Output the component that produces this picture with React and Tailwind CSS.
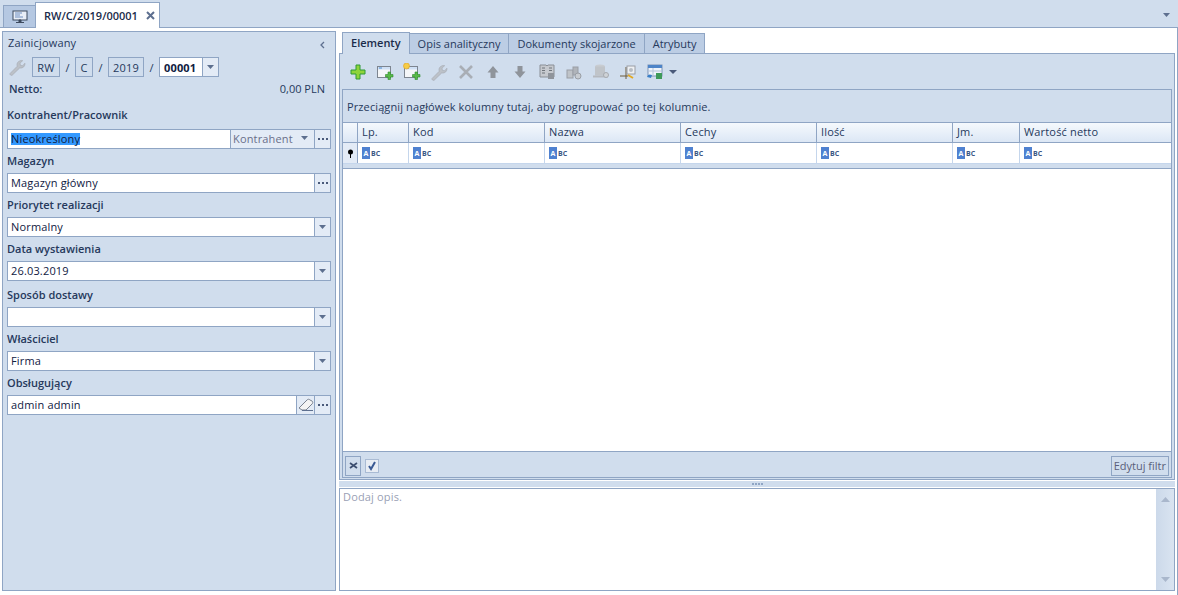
import React from "react";

const cols = "grid grid-cols-[15px_51px_136px_136px_136px_136px_67px_1fr]";

function Caret({ className = "fill-[#5d6f8f]", w = 7, h = 4 }) {
  return (
    <svg width={w} height={h} viewBox="0 0 9 5" preserveAspectRatio="none" className={className}>
      <path d="M0 0h9L4.500 5z" />
    </svg>
  );
}

function Dots() {
  return (
    <div className="flex items-center justify-center w-4 self-stretch border-l border-[#8fa5c4] bg-[#e3ebf6] gap-0.5">
      <i className="w-0.5 h-0.5 bg-[#4a5a7a]" />
      <i className="w-0.5 h-0.5 bg-[#4a5a7a]" />
      <i className="w-0.5 h-0.5 bg-[#4a5a7a]" />
    </div>
  );
}

function Drop() {
  return (
    <div className="flex items-center justify-center w-4 self-stretch border-l border-[#8fa5c4] bg-[#e3ebf6]">
      <Caret />
    </div>
  );
}

function Field({ label, value, children, className = "", inputClass = "" }) {
  return (
    <div className={className}>
      <div className="h-6 flex items-center pb-0.5 font-semibold tracking-normal text-[#26395c]">{label}</div>
      <div className={`flex items-center h-5 bg-white border border-[#8fa5c4] ${inputClass}`}>
        <div className="flex-1 pl-[3px] leading-4 text-[#10203f]">{value}</div>
        {children}
      </div>
    </div>
  );
}

function Box({ children, className = "" }) {
  return (
    <div className={`flex items-center justify-center h-5 border border-[#8fa5c4] text-[#26395c] ${className}`}>
      {children}
    </div>
  );
}

function Sep() {
  return <span className="w-[15px] text-center">/</span>;
}

function Abc() {
  return (
    <span className="flex items-center gap-px tracking-normal">
      <span className="flex items-center justify-center w-2 h-3 bg-[#4f81d0] text-white font-bold text-[7px] leading-none">A</span>
      <span className="text-[#3b5784] font-bold text-[7px] leading-none">BC</span>
    </span>
  );
}

function Wrench() {
  return (
    <svg width="18" height="18" viewBox="0 0 18 18">
      <path d="M2 15.500 9.200 8.300c-.7-2.300.1-4.700 3-5.600 1-.3 1.900-.2 2.500 0l-2.700 2.400.4 2.200 2.200.5 2.300-2.600c.4 2.800-1.800 5.300-5.200 4.800L4.200 17.200c-.9.700-2.900-.7-2.200-1.700z" fill="#bcc1c8" stroke="#a3a8b0" strokeWidth=".6" />
    </svg>
  );
}

function Win({ star }) {
  return (
    <svg width="18" height="18" viewBox="0 0 18 18">
      <rect x="1.500" y="3.500" width="13" height="11" fill="#f4f6f8" stroke="#7d8590" />
      <rect x="2" y="4" width="12" height="2.500" fill="#cfe0f5" />
      <rect x="3" y="4.500" width="3" height="1" fill="#4d8ad0" />
      <path d="M12 9h2.500v2.500H17V14h-2.500v2.500H12V14H9.500v-2.500H12z" fill="#58b947" stroke="#2d8b2d" strokeWidth=".6" />
      {star && <circle cx="3.500" cy="3" r="3" fill="#f6cc45" stroke="#e0a020" strokeWidth=".6" />}
    </svg>
  );
}

const toolbar = [
  <svg width="16" height="16" viewBox="0 0 16 16"><path d="M6 1h4v5h5v4h-5v5H6v-5H1V6h5z" fill="#8fd43a" stroke="#2f9a35" /></svg>,
  <Win />,
  <Win star />,
  <Wrench />,
  <svg width="16" height="16" viewBox="0 0 16 16"><path d="M2 2l12 12M14 2 2 14" stroke="#a9aeb5" strokeWidth="2.600" /></svg>,
  <svg width="14" height="14" viewBox="0 0 14 14"><path d="M7 1l5.500 6.500H9.500V13h-5V7.500H1.500z" fill="#8f949b" /></svg>,
  <svg width="14" height="14" viewBox="0 0 14 14"><path d="M7 13l5.500-6.500H9.500V1h-5v5.500H1.500z" fill="#8f949b" /></svg>,
  <svg width="18" height="18" viewBox="0 0 18 18"><path d="M2 2h6l1 1 1-1h6v12H2z" fill="#c6c9ce" stroke="#8a8f96" /><path d="M4 5h3M4 7.500h3M4 10h3M11 5h3M11 7.500h3" stroke="#6f747b" /><rect x="10" y="10" width="6" height="6" fill="#8f949b" /></svg>,
  <svg width="18" height="18" viewBox="0 0 18 18"><rect x="2" y="7" width="6" height="8" fill="#bfc3c8" stroke="#999ea5" /><rect x="8" y="4" width="5" height="8" fill="#b0b4ba" stroke="#999ea5" /><circle cx="13" cy="13" r="3" fill="#c8ccd1" stroke="#999ea5" /></svg>,
  <svg width="18" height="18" viewBox="0 0 18 18"><ellipse cx="8" cy="3.500" rx="5" ry="2" fill="#c8ccd1" /><rect x="3" y="3.500" width="10" height="9" fill="#c0c4c9" /><rect x="1" y="12.500" width="15" height="2" fill="#b5b9bf" /><circle cx="14" cy="12" r="2.500" fill="#d0d3d7" stroke="#a5a9af" /></svg>,
  <svg width="18" height="18" viewBox="0 0 18 18"><path d="M1 13h8M7 4v12" stroke="#6d5a3a" /><rect x="8" y="3" width="8" height="8" fill="#eef0f3" stroke="#9a9ea5" /><path d="M9 12l5 3" stroke="#e3a820" strokeWidth="2" /><circle cx="12" cy="7" r="2" fill="#b8bdc4" /></svg>,
  <svg width="18" height="18" viewBox="0 0 18 18"><rect x="2" y="2" width="14" height="11" fill="#eef3fa" stroke="#7d93b5" /><rect x="2" y="2" width="14" height="3" fill="#4d84c8" /><path d="M2 8h14M7 5v8" stroke="#b5c4da" /><path d="M1 14c1-3 3-3 5-2l-1 3z" fill="#3a7fc8" /><rect x="10" y="10" width="6" height="6" fill="#3f9a5a" /></svg>,
];

export default function App() {
  return (
    <div className="h-[595px] flex flex-col bg-white text-[11px] leading-none tracking-[0.015em] font-['Open_Sans',sans-serif] overflow-hidden">
      {/* Document tabs */}
      <div className="flex items-end h-7 shrink-0 pl-[3px] pr-2 bg-[#d0dded] border-b border-[#8fa5c4]">
        <div className="flex items-center justify-center w-8 h-[23px] -mb-px border border-[#8fa5c4] border-r-0 bg-[#b5c8e2]">
          <svg width="16" height="14" viewBox="0 0 16 14">
            <rect x="1" y="1" width="14" height="9" fill="#e8eef7" stroke="#3d4a5f" />
            <path d="M3 3h7M3 5h5M3 7h8" stroke="#6f8fc0" />
            <path d="M7 10h2v2H7zM4 12.500h8" stroke="#3d4a5f" fill="#3d4a5f" />
          </svg>
        </div>
        <div className="flex items-center gap-2 h-[26px] -mb-px pl-2 pr-1 bg-white border border-b-0 border-[#8fa5c4] font-semibold tracking-normal text-[#1a2b4a]">
          RW/C/2019/00001
          <svg width="9" height="9" viewBox="0 0 9 9"><path d="M1 1l7 7M8 1 1 8" stroke="#5d6f8f" strokeWidth="2" /></svg>
        </div>
        <div className="flex-1" />
        <div className="pb-2.5"><Caret /></div>
      </div>

      <div className="flex-1 flex gap-0.5 pl-0.5 pr-0.5 pt-[3px] pb-1 min-h-0 border-r border-[#8fa5c4]">
        {/* Left panel */}
        <div className="w-[334px] shrink-0 flex flex-col px-1 pt-px bg-[#d0dded] border border-[#8fa5c4]">
          <div className="flex items-center justify-between h-4 pl-px pr-0.5 text-[#26395c]">
            <span className="pt-0.5">Zainicjowany</span>
            <svg width="6" height="8" viewBox="0 0 6 8" className="mr-1 mt-2"><path d="M5 1 2 4l3 3" fill="none" stroke="#5d6f8f" strokeWidth="1.300" /></svg>
          </div>
          <div className="flex items-center mt-2 text-[#26395c]">
            <div className="w-6 ml-px"><Wrench /></div>
            <Box className="w-7">RW</Box>
            <Sep />
            <Box className="w-4.5">C</Box>
            <Sep />
            <Box className="w-9">2019</Box>
            <Sep />
            <div className="flex items-center h-5 w-15 bg-white border border-[#8fa5c4] pl-1 font-bold text-[#10203f]">
              <span className="flex-1">00001</span>
              <Drop />
            </div>
          </div>
          <div className="flex items-center justify-between mt-[3px] h-4 pl-0.5 pr-1.5 tracking-normal text-[#26395c]">
            <span className="font-semibold">Netto:</span>
            <span>0,00 PLN</span>
          </div>
          <Field
            className="mt-[7px]"
            inputClass="mt-0.5"
            label="Kontrahent/Pracownik"
            value={<span className="inline-block leading-3 bg-[#3399ff] text-[#10203f]">Nieokreślony</span>}
          >
            <div className="flex items-center justify-between w-[84px] self-stretch px-0.5 pb-0.5 border-l border-[#8fa5c4] bg-[#e3ebf6] text-[#6a6f8a]">
              <span>Kontrahent</span>
              <Caret className="mr-1 fill-[#5d6f8f]" />
            </div>
            <Dots />
          </Field>
          <Field label="Magazyn" value="Magazyn główny"><Dots /></Field>
          <Field label="Priorytet realizacji" value="Normalny"><Drop /></Field>
          <Field label="Data wystawienia" value="26.03.2019"><Drop /></Field>
          <Field className="mt-0.5" label="Sposób dostawy" value=""><Drop /></Field>
          <Field label="Właściciel" value="Firma"><Drop /></Field>
          <Field label="Obsługujący" value="admin admin">
            <div className="flex items-center justify-center w-4.5 self-stretch border-l border-[#8fa5c4] bg-[#e3ebf6]">
              <svg width="16" height="16" viewBox="0 0 16 16">
                <path d="M1 11 9 3c1-1 2-1 3 0l2 1c1 1 1 2 0 3l-6 6H4z" fill="#f4f4f4" stroke="#7a8290" />
                <path d="M4 13.500h11" stroke="#5d6f8f" />
              </svg>
            </div>
            <Dots />
          </Field>
        </div>

        {/* Right side */}
        <div className="flex-1 min-w-0 ml-px flex flex-col">
          <div className="flex items-end h-[22px] pl-[3px] shrink-0 tracking-normal text-[#26395c]">
            <div className="flex items-center h-[22px] -mb-px px-2 pb-0.5 z-10 font-semibold text-[#1a2b4a] bg-[#d0dded] border border-b-0 border-[#8fa5c4]">Elementy</div>
            <div className="flex items-center h-5 px-2 bg-[#bccde4] border border-l-0 border-b-0 border-[#8fa5c4]">Opis analityczny</div>
            <div className="flex items-center h-5 px-2 bg-[#bccde4] border border-l-0 border-b-0 border-[#8fa5c4]">Dokumenty skojarzone</div>
            <div className="flex items-center h-5 px-2 bg-[#bccde4] border border-l-0 border-b-0 border-[#8fa5c4]">Atrybuty</div>
          </div>

          <div className="h-[427px] shrink-0 flex flex-col bg-[#d0dded] border border-[#8fa5c4]">
            <div className="flex items-center h-[35px] shrink-0 pl-1">
              {toolbar.map((icon, i) => (
                <div key={i} className="flex items-center justify-center w-[27px]">{icon}</div>
              ))}
              <Caret className="ml-px fill-[#4a5a7a]" w={8} h={4} />
            </div>

            <div className="flex-1 min-h-0 flex flex-col mx-0.5 border border-[#8fa5c4]">
              <div className="flex items-center h-8 shrink-0 pl-1 tracking-[0.01em] text-[#26395c] bg-[#d0dded]">
                Przeciągnij nagłówek kolumny tutaj, aby pogrupować po tej kolumnie.
              </div>
              <div className={`${cols} h-[21px] shrink-0 border-y border-[#8fa5c4] bg-gradient-to-b from-[#f5f9fd] to-[#dce7f5] text-[#26395c]`}>
                {["", "Lp.", "Kod", "Nazwa", "Cechy", "Ilość", "Jm.", "Wartość netto"].map((h, i) => (
                  <div key={i} className="flex items-center px-1 pb-0.5 border-r border-[#8fa5c4] last:border-r-0">{h}</div>
                ))}
              </div>
              <div className={`${cols} h-[21px] shrink-0 bg-white border-b border-[#c5d6ec]`}>
                <div className="flex items-center justify-center bg-[#e3ebf6] border-r border-[#8fa5c4]">
                  <svg width="7" height="9" viewBox="0 0 7 9"><circle cx="3.500" cy="3" r="2.500" /><path d="M3 5h1v4H3z" /></svg>
                </div>
                {[1, 2, 3, 4, 5, 6, 7].map((c) => (
                  <div key={c} className="flex items-center px-1 border-r border-[#c5d6ec] last:border-r-0"><Abc /></div>
                ))}
              </div>
              <div className="flex-1 min-h-0 mt-1 bg-white border-t border-[#8fa5c4]" />
              <div className="flex items-center justify-between h-[26px] shrink-0 px-0.5 pt-0.5 bg-[#d0dded] border-t border-[#8fa5c4]">
                <div className="flex items-center gap-1">
                  <div className="flex items-center justify-center w-4 h-5 border border-[#8fa5c4]">
                    <svg width="9" height="7" viewBox="0 0 9 7"><path d="M1 1l7 5M8 1 1 6" stroke="#3d4f70" strokeWidth="1.800" /></svg>
                  </div>
                  <div className="flex items-center justify-center w-3.5 h-3.5 border border-[#a9bbd4] bg-[#e8edf4]">
                    <svg width="10" height="10" viewBox="0 0 10 10"><path d="M2 5l2 3 4-7" fill="none" stroke="#3a5a94" strokeWidth="2" /></svg>
                  </div>
                </div>
                <div className="flex items-center h-5 px-0.5 border border-[#8fa5c4] tracking-normal text-[#5a5f7a]">Edytuj filtr</div>
              </div>
            </div>
            <div className="h-px shrink-0" />
          </div>

          {/* Splitter */}
          <div className="flex items-center justify-center gap-px h-1.5 my-px shrink-0 bg-[#d0dded]">
            <i className="w-0.5 h-0.5 bg-[#8fa5c4]" />
            <i className="w-0.5 h-0.5 bg-[#8fa5c4]" />
            <i className="w-0.5 h-0.5 bg-[#8fa5c4]" />
            <i className="w-0.5 h-0.5 bg-[#8fa5c4]" />
          </div>

          <div className="flex-1 min-h-0 flex bg-white border border-[#8fa5c4]">
            <div className="flex-1 pl-[3px] pt-0.5 text-[#9a9fb5]">Dodaj opis.</div>
            <div className="flex flex-col items-center justify-between w-4.5 py-2 bg-gradient-to-r from-[#ccd9ea] to-[#d9e4f1]">
              <Caret className="rotate-180 fill-[#a9b7cc]" w={9} h={5} />
              <Caret className="fill-[#a9b7cc]" w={9} h={5} />
            </div>
          </div>
        </div>
      </div>
    </div>
  );
}
